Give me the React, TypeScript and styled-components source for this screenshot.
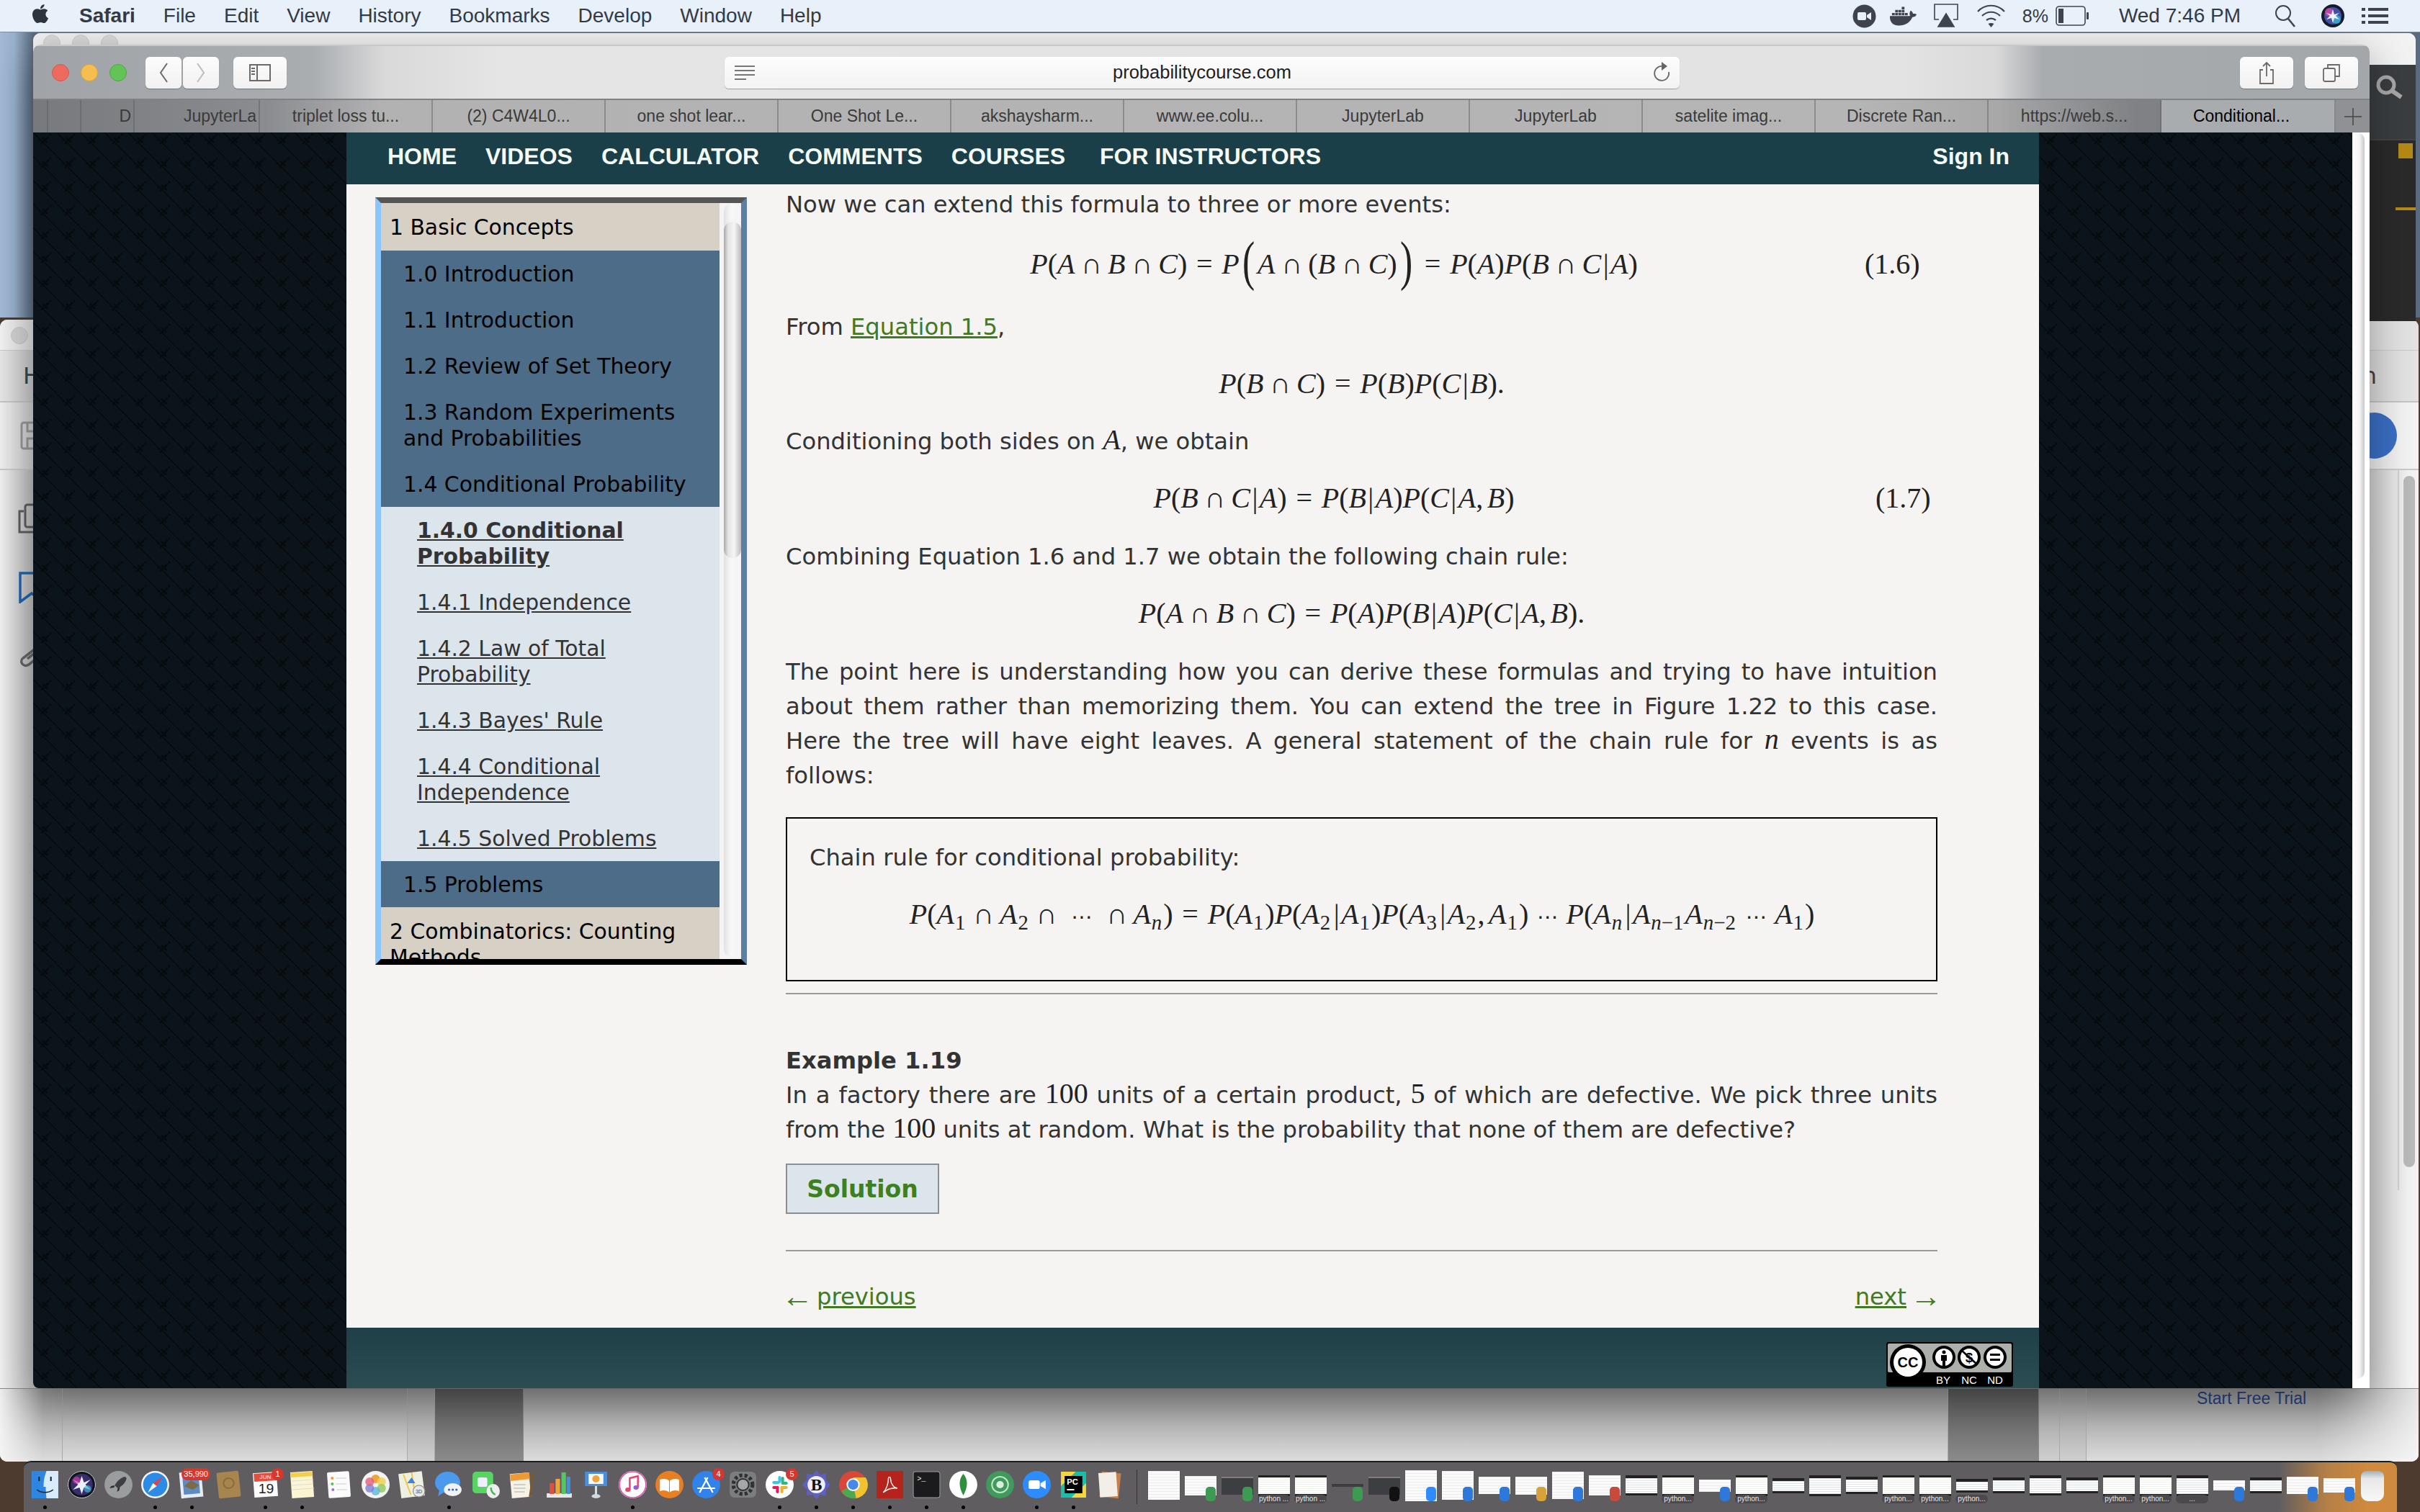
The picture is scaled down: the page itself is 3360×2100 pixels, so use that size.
import React from "react";
import styled, { createGlobalStyle } from "styled-components";
import { FaApple, FaDocker } from "react-icons/fa";

const Global = createGlobalStyle`
  html, body { margin: 0; padding: 0; width: 3360px; height: 2100px; overflow: hidden; background: #4d3b2f; }
  * { box-sizing: border-box; }
`;

const SANS = `"Liberation Sans", Arial, sans-serif`;
const BODY = `"DejaVu Sans", Verdana, sans-serif`;
const SERIF = `"Liberation Serif", "DejaVu Serif", serif`;

const PATTERN = `url("data:image/svg+xml,%3Csvg xmlns='http://www.w3.org/2000/svg' width='33' height='33'%3E%3Cpath d='M-3 -3L36 36' stroke='%23070a0d' stroke-width='1.6'/%3E%3Cpath d='M22 5L11 16M13 7L20 14M10 9L8 11M25 2L23 4' stroke='%23080b0e' stroke-width='3'/%3E%3C/svg%3E")`;

const Desktop = styled.div`
  position: relative; width: 3360px; height: 2100px; overflow: hidden;
  background: linear-gradient(180deg, transparent 0, transparent 21%, #4d3b2f 21%, #4d3b2f 100%),
    linear-gradient(90deg, #a4bbd8 0, #9ab1cc 20px, #5a6b80 46px);
`;

/* ---------- menu bar ---------- */
const MenuBar = styled.div`
  position: absolute; left: 0; top: 0; width: 3360px; height: 45px; z-index: 5;
  display: flex; align-items: center; justify-content: space-between;
  padding: 0 44px 0 41px; background: #e8f0f9; border-bottom: 1px solid #7d8ea1;
  font: 28px ${SANS}; color: #333a45;
`;
const MenuLeft = styled.div`display: flex; align-items: center; gap: 39px;`;
const AppleMark = styled.span`display: flex; font-size: 30px; margin-top: -6px; color: #2e343d;`;
const MenuApp = styled.b`font-weight: 700;`;
const MenuRight = styled.div`display: flex; align-items: center;`;
const Tray = styled.span<{ $ml: number }>`display: flex; align-items: center; margin-left: ${(p) => p.$ml}px;`;
const TrayPct = styled(Tray)`font-size: 25px;`;

/* ---------- back windows ---------- */
const BackTop = styled.div`
  position: absolute; left: 46px; top: 46px; width: 3308px; height: 400px; border-radius: 10px 10px 0 0;
  background: #f4f4f4; display: flex; flex-direction: column; overflow: hidden;
`;
const BackTopTitle = styled.div`height: 44px; display: flex; gap: 16px; padding: 2px 0 0 14px; background: #f3f3f3; flex: none;`;
const GhostLight = styled.span`width: 24px; height: 24px; border-radius: 50%; background: #dcdcdc; border: 1px solid #cfcfcf;`;
const DarkPane = styled.div`flex: 1; background: #2a2a2a; display: flex; flex-direction: column; align-items: flex-end;`;
const DarkSearch = styled.div`
  width: 100%; height: 105px; background: #3a3e40; border-bottom: 2px solid #444;
  display: flex; justify-content: flex-end; padding: 14px 14px 0 0; color: #a9a9a9;
`;
const GoldChip = styled.span`width: 20px; height: 21px; background: #b58a16; margin: 4px 4px 0 0;`;
const GoldRule = styled.span`width: 28px; height: 4px; background: #b58a16; margin-top: 68px;`;

const BackMain = styled.div`
  position: absolute; left: 0; top: 444px; width: 3358px; height: 1586px; border-radius: 10px;
  background: #f2f2f2; display: flex; flex-direction: column; overflow: hidden;
`;
const BackTitle = styled.div`height: 43px; flex: none; border-bottom: 1px solid #c9c9c9; padding: 10px 0 0 15px; background: linear-gradient(90deg, #f3f3f3 0, #e2e2e2 40px);`;
const BackLight = styled.span`display: block; width: 24px; height: 24px; border-radius: 50%; background: #d3d3d3; border: 1px solid #c8c8c8;`;
const BackTabs = styled.div`
  height: 72px; flex: none; border-bottom: 2px solid #c5c5c5; display: flex; justify-content: space-between; align-items: center;
  padding: 0 58px 0 32px; font: 32px ${BODY}; color: #444; background: linear-gradient(90deg, #e8e8e8 0, #c8c8c8 46px, #dcdcdc 3290px, #e4e4e4 100%);
`;
const BackTools = styled.div`
  height: 94px; flex: none; border-bottom: 2px solid #c9c9c9; display: flex; justify-content: space-between; align-items: center;
  padding: 0 30px 0 28px; background: linear-gradient(90deg, #f0f0f0 0, #cfcfcf 46px, #eee 3290px, #f4f4f4 100%);
`;
const BlueDot = styled.span`width: 64px; height: 64px; border-radius: 50%; background: #3a6fc4;`;
const BackBody = styled.div`flex: 1; display: flex; justify-content: space-between; background: linear-gradient(90deg, #f2f2f2 0, #bdbdbd 46px, #d0d0d0 3290px, #f3f3f3 3345px);`;
const BackIcons = styled.div`display: flex; flex-direction: column; gap: 52px; padding: 45px 0 0 24px; color: #666;`;
const BackScrollCol = styled.div`width: 29px; border-left: 2px solid #cfcfcf; padding: 8px 6px 0 6px; height: 1000px;`;
const BackScroll = styled.div`width: 16px; height: 960px; border-radius: 8px; background: #b9b9b9;`;
const BackStrip = styled.div`
  height: 102px; flex: none; display: flex; border-top: 1px solid #888; margin-top: auto;
`;
const StripCol = styled.div<{ $w?: number; $dark?: boolean; $mid?: boolean; $fade?: boolean }>`
  ${(p) => (p.$w ? `width:${p.$w}px;flex:none;` : "flex:1;")}
  border-right: 1px solid ${(p) => (p.$dark ? "#8a8a8a" : "#a9a9a9")};
  background: ${(p) =>
    p.$dark
      ? "linear-gradient(180deg,#5a5a5a,#8b8b8b)"
      : p.$mid
        ? "linear-gradient(180deg,#9a9a9a,#cfcfcf)"
        : p.$fade
          ? "linear-gradient(90deg,rgba(245,245,245,.95) 0,rgba(245,245,245,0) 60px),linear-gradient(180deg,#959595,#dcdcdc)"
          : "linear-gradient(180deg,#959595,#dcdcdc)"};
`;
const StripLast = styled.div`
  flex: 1; padding: 0 0 0 153px; font: 23px ${SANS}; color: #24407f;
  background: linear-gradient(90deg, rgba(255,255,255,0) 70%, rgba(255,255,255,.75) 100%), linear-gradient(180deg,#959595,#dcdcdc);
`;

/* ---------- Safari ---------- */
const Safari = styled.div`
  position: absolute; left: 46px; top: 62px; width: 3244px; height: 1866px; z-index: 2;
  border-radius: 10px 10px 0 8px; overflow: hidden; display: flex; flex-direction: column;
  box-shadow: 0 16px 60px rgba(0,0,0,.35);
`;
const Toolbar = styled.div`
  height: 75px; flex: none; display: flex; align-items: center; padding: 0 16px 0 26px; position: relative;
  border-top: 2px solid #c8c8c8;
  background: linear-gradient(90deg, #a0a4a8 0, #a9adb0 12%, #d9d9da 15%, #e6e5e6 20%, #e4e3e4 80%, #d9d9da 84%, #a9acaf 86%, #a4a7aa 100%);
`;
const Lights = styled.div`display: flex; gap: 16px; margin-right: 26px;`;
const Light = styled.span<{ $c: string; $b: string }>`
  width: 24px; height: 24px; border-radius: 50%; background: ${(p) => p.$c}; border: 1px solid ${(p) => p.$b};
`;
const ToolBtn = styled.div<{ $w: number; $ml?: number }>`
  width: ${(p) => p.$w}px; height: 44px; margin-left: ${(p) => p.$ml ?? 0}px; flex: none; border-radius: 6px;
  background: linear-gradient(180deg, #fcfcfc, #f1f1f1); box-shadow: 0 1px 1px rgba(0,0,0,.3);
  display: flex; align-items: center; justify-content: center; color: #6a6a6a;
`;
const Address = styled.div`
  width: 1326px; height: 44px; margin-left: 608px; flex: none; border-radius: 6px; position: relative;
  background: linear-gradient(180deg, #fdfdfd, #f3f3f3); box-shadow: 0 1px 1px rgba(0,0,0,.3);
  display: flex; align-items: center; justify-content: space-between; padding: 0 12px 0 14px;
`;
const AddressText = styled.span`
  position: absolute; left: 0; right: 0; text-align: center; font: 25.5px ${SANS}; color: #1e1e1e;
`;
const ToolRight = styled.div`margin-left: auto; display: flex; gap: 16px;`;

const TabBar = styled.div`
  height: 47px; flex: none; display: flex; border-top: 2px solid #808184; font: 23px ${SANS}; color: #3a3a3a;
  background: linear-gradient(90deg, #77797d 0, #8a8c8f 10%, #b3b2b3 15%, #b6b5b6 78%, #a8a8a9 84%, #7f8184 90%, #7f8184 91%);
`;
const Tab = styled.div<{ $w: number; $active?: boolean; $end?: boolean }>`
  width: ${(p) => p.$w}px; flex: none; display: flex; align-items: center;
  justify-content: ${(p) => (p.$end ? "flex-end" : "center")}; padding-right: ${(p) => (p.$end ? 3 : p.$active ? 18 : 0)}px;
  overflow: hidden; white-space: nowrap; border-right: 2px solid rgba(90,90,92,.45);
  ${(p) => (p.$active ? "background:#a9acaf;color:#000;" : "")}
`;
const TabPlus = styled.div`flex: 1; display: flex; align-items: center; justify-content: center; color: #444; background: #8f9194;`;

const Viewport = styled.div`flex: 1; display: flex; min-height: 0;`;
const Wall = styled.div`width: 435px; flex: none; background-color: #0a141a; background-image: ${PATTERN};`;
const Gutter = styled.div`flex: 1; background: #fff; padding-right: 7px;`;
const GutterPill = styled.div`height: 1731px; border-radius: 0 10px 10px 0; background: linear-gradient(90deg, #fff 0, #f3f3f3 60%, #c8c8c8 100%);`;

const Page = styled.div`width: 2350px; flex: none; display: flex; flex-direction: column; background: #f5f4f2;`;
const NavBar = styled.nav`
  height: 72px; flex: none; background: #1b3f48; display: flex; align-items: center; padding: 0 41px 6px 57px;
  gap: 40px; font: 700 32px ${SANS}; color: #f4fbf6;
`;
const SignIn = styled.span`margin-left: auto;`;
const NavWide = styled.span`margin-left: 8px;`;
const Main = styled.div`flex: 1; display: flex; padding-left: 40px; min-height: 0;`;
const PageFoot = styled.footer`
  height: 84px; flex: none; background: linear-gradient(180deg, #203f48, #2a4d52); display: flex; justify-content: flex-end;
  padding: 20px 36px 2px 0;
`;

/* sidebar */
const Sidebar = styled.aside`
  width: 516px; height: 1066px; margin-top: 18px; flex: none; display: flex; overflow: hidden;
  border-style: solid; border-width: 8px; border-color: #555 #5b7fa3 #000 #8cc5fb;
  font: 29.8px/36px ${BODY};
`;
const TocList = styled.div`width: 470px; flex: none; overflow: hidden;`;
const Chapter = styled.div`background: #d7d0c5; color: #000; padding: 16px 12px 14px;`;
const Section = styled.div`background: #4c6c87; color: #000; padding: 15px 20px 13px 31px;`;
const SubGroup = styled.div`background: #dde5ec; color: #333;`;
const Sub = styled.div<{ $on?: boolean }>`
  padding: 15px 40px 13px 50px; text-decoration: underline; font-weight: ${(p) => (p.$on ? 700 : 400)};
`;
const TocTrack = styled.div`flex: 1; padding-left: 6px; background: #f5f4f2;`;
const TocRail = styled.div`
  width: 24px; height: 1048px; border-radius: 12px; padding-top: 26px;
  background: linear-gradient(90deg, #e2e2e2, #f7f7f7 40%, #f4f4f4);
`;
const TocThumb = styled.div`
  width: 24px; height: 467px; border-radius: 12px;
  background: linear-gradient(90deg, #a9a9a9 0, #e4e4e4 25%, #f5f5f5 60%, #bbb 100%);
`;

/* article */
const Article = styled.article`
  width: 1599px; margin-left: 54px; flex: none; font: 32.2px/48px ${BODY}; color: #333;
`;
const P = styled.p<{ $mt: number }>`margin: ${(p) => p.$mt}px 0 0 0;`;
const JLine = styled.span`display: block; text-align: justify; text-align-last: justify;`;
const Line = styled.span`display: block;`;
const A = styled.a`color: #417a22; text-decoration: underline;`;
const EqRow = styled.div<{ $mt: number; $h?: number }>`
  margin-top: ${(p) => p.$mt}px; height: ${(p) => p.$h ?? 48}px; display: flex; align-items: center;
  font: 40px/48px ${SERIF}; color: #222; white-space: nowrap;
`;
const EqCenter = styled.div`flex: 1; text-align: center;`;
const EqTagged = styled.div`width: 1400px; margin-left: 61px; flex: none; text-align: center;`;
const EqTag = styled.span<{ $ml: number }>`margin-left: ${(p) => p.$ml}px;`;
const Inline = styled.span`font: 40px/1 ${SERIF}; color: #222;`;
const InlineVar = styled.i`font: italic 40px/1 ${SERIF}; color: #222;`;
const MVar = styled.i`font-style: italic;`;
const MBin = styled.span`margin: 0 .21em;`;
const MRel = styled.span`margin: 0 .32em;`;
const MPipe = styled.span`margin: 0 .06em;`;
const MDots = styled.span`margin: 0 12px; font-family: ${BODY}; font-size: .72em; letter-spacing: -.02em;`;
const MComma = styled.span`margin-right: .14em;`;
const MBig = styled.span`font-size: 1.9em; font-weight: 400; line-height: 0; vertical-align: -.1em; transform: scaleX(.68); display: inline-block;`;
const MSub = styled.span`font-size: .72em; vertical-align: -.28em; line-height: 0; margin: 0 2px 0 1px;`;
const Rule = styled.div<{ $mt: number }>`height: 2px; margin-top: ${(p) => p.$mt}px; background: #9a9a9a;`;
const Boxed = styled.div`
  margin-top: 34px; height: 228px; border: 2px solid #000; padding: 30px 29px 0 31px;
`;
const BoxEq = styled(EqRow)`margin-left: -1px;`;
const Strong = styled.div`margin-top: 68px; font-weight: 700; line-height: 48px;`;
const SolutionBtn = styled.div`
  margin-top: 23px; width: 213px; height: 70px; border: 2px solid #8a8f94; background: #dde5ec; color: #3d8020;
  font: 700 33px/68px ${BODY}; text-align: center;
`;
const Pager = styled.div`margin-top: 39px; display: flex; justify-content: space-between; color: #417a22;`;
const PagerSide = styled.span`display: flex; align-items: center; gap: 5px;`;
const ArrowBack = styled.span`font: 44px/1 ${SERIF}; margin-left: -6px;`;
const ArrowNext = styled.span`font: 44px/1 ${SERIF}; margin-right: -6px;`;

/* dock */
const Dock = styled.div`
  position: absolute; left: 33px; top: 2029px; width: 3295px; height: 71px; z-index: 3;
  border-radius: 10px 10px 0 0; border-top: 2px solid #1c1c1f; display: flex; padding: 0 0 0 4px;
  background: linear-gradient(90deg, #5f5d60 0, #5f5d60 95%, #b47f47 97%, #cf8a3d 98.8%);
`;
const DockApp = styled.div`width: 51px; flex: none; position: relative; padding: 11px 4px 0 4px;`;
const DockDot = styled.span`position: absolute; left: 23px; top: 60px; width: 5px; height: 5px; border-radius: 50%; background: #000;`;
const DockBadge = styled.span`
  position: absolute; right: 0; top: 8px; min-width: 17px; height: 17px; padding: 0 3px; border-radius: 9px; background: #d8362d;
  color: #fff; font: 11px/17px ${SANS}; text-align: center;
`;
const DockSep = styled.span`width: 1px; height: 48px; margin: 10px 11px 0 11px; background: #333; flex: none;`;
const ThumbCell = styled.div`width: 51px; flex: none; position: relative; display: flex; justify-content: center; align-items: center; height: 50px; margin-top: 7px;`;
const ThumbBox = styled.div<{ $kind: string; $h: number }>`
  width: 44px; height: ${(p) => p.$h}px;
  ${(p) => (p.$kind === "py"
    ? "background:repeating-linear-gradient(180deg,#eef3e8 0,#eef3e8 1px,#fff 1px,#fff 3px);border-top:3px solid #222;border-bottom:3px solid #222;"
    : p.$kind === "term"
      ? "background:repeating-linear-gradient(180deg,#dfe3e6 0,#dfe3e6 1px,#fff 1px,#fff 3px);border-top:4px solid #222;border-bottom:3px solid #222;"
      : p.$kind === "dark"
        ? "background:linear-gradient(180deg,#7f7f7f 0,#7f7f7f 2px,#3d3e42 2px);"
        : p.$kind === "line"
          ? "background:#3d3e42;"
          : "background:repeating-linear-gradient(180deg,#ececec 0,#ececec 1px,#fbfbfb 1px,#fbfbfb 4px);")}
`;
const ThumbBadge = styled.span<{ $c: string }>`
  position: absolute; right: 4px; bottom: 3px; width: 14px; height: 20px; border-radius: 5px; background: ${(p) => p.$c};
`;
const ThumbLabel = styled.span`
  position: absolute; left: 3px; right: 3px; bottom: 0; height: 12px; border-radius: 6px; background: #4b494c;
  color: #e6e6e6; font: 10px/12px ${SANS}; text-align: center; overflow: hidden; white-space: nowrap;
`;
const Trash = styled.div`
  width: 32px; height: 42px; margin: 12px 0 0 5px; flex: none; border-radius: 8px 8px 10px 10px;
  background: linear-gradient(180deg, #9fb0ba 0, #e8e8e8 25%, #f8f8f8 100%);
`;

/* ---------- math ---------- */
function renderMath(s: string): React.ReactNode[] {
  const out: React.ReactNode[] = [];
  for (let i = 0; i < s.length; i++) {
    const c = s[i];
    const k = i;
    if (c === "_") {
      let inner = s[i + 1];
      if (inner === "{") {
        const e = s.indexOf("}", i);
        inner = s.slice(i + 2, e);
        i = e;
      } else i++;
      out.push(<MSub key={k}>{renderMath(inner)}</MSub>);
    } else if (c === "∩") out.push(<MBin key={k}>∩</MBin>);
    else if (c === "=") out.push(<MRel key={k}>=</MRel>);
    else if (c === "|") out.push(<MPipe key={k}>|</MPipe>);
    else if (c === "~") out.push(<MDots key={k}>⋯</MDots>);
    else if (c === ",") out.push(<MComma key={k}>,</MComma>);
    else if (c === "[") out.push(<MBig key={k}>(</MBig>);
    else if (c === "]") out.push(<MBig key={k}>)</MBig>);
    else if (/[A-Za-z]/.test(c)) out.push(<MVar key={k}>{c}</MVar>);
    else out.push(<span key={k}>{c}</span>);
  }
  return out;
}

/* ---------- dock icons ---------- */
const Ico = ({ children }: { children: React.ReactNode }) => (
  <svg width="43" height="40" viewBox="0 0 42 40" preserveAspectRatio="none">{children}</svg>
);
const round = (c: string) => <circle cx="21" cy="20" r="19" fill={c} />;
const apps: { n: string; dot?: boolean; badge?: string; g: React.ReactNode }[] = [
  { n: "finder", dot: true, g: <><rect x="3" y="1" width="36" height="38" fill="#d9ecfb" /><path d="M3 1h20c-3 8-4 14-4 22h3c0 6 .5 11 1 16H3z" fill="#2f86e0" /><path d="M13 9v6M29 9v6" stroke="#123" strokeWidth="2" /><path d="M10 27c6 5 16 5 22 0" stroke="#123" strokeWidth="1.6" fill="none" /></> },
  { n: "siri", g: <>{round("#10131c")}<circle cx="21" cy="20" r="15" fill="#3a2d6c" /><path d="M21 8l3 9 9-4-7 7 7 7-9-3-3 9-3-9-9 3 7-7-7-7 9 4z" fill="#e9f1ff" /><circle cx="14" cy="14" r="5" fill="#d03fa0" opacity=".7" /><circle cx="29" cy="26" r="5" fill="#3fb6d8" opacity=".7" /><circle cx="21" cy="20" r="18.5" fill="none" stroke="#fff" strokeWidth=".8" /></> },
  { n: "launchpad", g: <>{round("#9a9c9e")}<path d="M30 9c-6 1-11 6-14 12l4 4c6-3 11-8 12-14z" fill="#3c3f44" /><path d="M16 21l-5 1-2 3 6-1zM20 25l-1 5 3-2 1-5z" fill="#2c2e32" /></> },
  { n: "safari", dot: true, g: <>{round("#f4f6f8")}<circle cx="21" cy="20" r="16.5" fill="#2d8be8" /><path d="M31 9L18 18l5 4z" fill="#e2433b" /><path d="M11 31l7-13 5 4z" fill="#fff" /></> },
  { n: "mail", dot: true, badge: "35,990", g: <><rect x="5" y="2" width="30" height="36" fill="#e5edf7" transform="rotate(-5 20 20)" /><rect x="9" y="7" width="22" height="26" fill="#5e8cc2" transform="rotate(-5 20 20)" /><path d="M10 22l10-8 11 7-9 6z" fill="#7d6a46" /></> },
  { n: "contacts", g: <><rect x="6" y="2" width="30" height="36" rx="2" fill="#a8844f" transform="rotate(-6 21 20)" /><circle cx="21" cy="18" r="7" fill="none" stroke="#8d6c3c" strokeWidth="2" /></> },
  { n: "calendar", dot: true, badge: "1", g: <><rect x="5" y="3" width="32" height="34" fill="#fff" transform="rotate(-4 21 20)" /><path d="M5 5l32-2 1 11-32 2z" fill="#e0503f" /><text x="21" y="12" fontSize="8" fill="#fff" textAnchor="middle" fontFamily="Liberation Sans">JUN</text><text x="22" y="32" fontSize="19" fill="#222" textAnchor="middle" fontFamily="Liberation Sans">19</text></> },
  { n: "notes", dot: true, g: <><rect x="6" y="2" width="30" height="36" fill="#fbf5d2" transform="rotate(-4 21 20)" /><path d="M5 4l30-2 .5 6-30 2z" fill="#f3ce4a" /><path d="M7 15l29-2M7 21l29-2M8 27l29-2" stroke="#ddd" /></> },
  { n: "reminders", g: <><rect x="6" y="2" width="30" height="36" rx="2" fill="#fbfbfb" transform="rotate(-4 21 20)" /><circle cx="12" cy="11" r="2" fill="#f29a3b" /><circle cx="12" cy="19" r="2" fill="#57c15a" /><circle cx="13" cy="27" r="2" fill="#a86cd6" /><path d="M17 11h14M17 19h14M18 27h14" stroke="#ccc" /></> },
  { n: "photos", g: <>{round("#f3f3f3")}<circle cx="21" cy="12" r="6" fill="#f0a43b" /><circle cx="29" cy="16" r="6" fill="#ecd24c" opacity=".8" /><circle cx="29" cy="25" r="6" fill="#8ecb5a" opacity=".8" /><circle cx="21" cy="29" r="6" fill="#5fb6d8" opacity=".8" /><circle cx="13" cy="25" r="6" fill="#7b7fd8" opacity=".8" /><circle cx="13" cy="16" r="6" fill="#e2607d" opacity=".8" /></> },
  { n: "maps", g: <><rect x="4" y="3" width="32" height="34" fill="#eef0e2" transform="rotate(-7 21 20)" /><path d="M9 6l10 28M20 3l5 33" stroke="#f2c94c" strokeWidth="2" /><path d="M14 18l6-8 5 8z" fill="#3f84d8" /><circle cx="30" cy="29" r="8" fill="#e8e8e8" stroke="#888" /><text x="30" y="32" fontSize="7" textAnchor="middle" fill="#444" fontFamily="Liberation Sans">3D</text></> },
  { n: "messages", dot: true, g: <><ellipse cx="19" cy="17" rx="17" ry="15" fill="#4c9aee" /><path d="M8 27l-2 9 9-6z" fill="#4c9aee" /><ellipse cx="26" cy="27" rx="12" ry="9" fill="#f2f2f2" /><circle cx="21" cy="27" r="1.6" fill="#2c6bc0" /><circle cx="26" cy="27" r="1.6" fill="#2c6bc0" /><circle cx="31" cy="27" r="1.6" fill="#2c6bc0" /></> },
  { n: "facetime", g: <><rect x="3" y="2" width="28" height="30" rx="5" fill="#58d465" /><rect x="10" y="10" width="13" height="13" rx="2" fill="#eef" /><ellipse cx="31" cy="29" rx="9" ry="10" fill="#eee" /><path d="M28 24c0 5 2 8 6 10" stroke="#47b556" strokeWidth="2.4" fill="none" /></> },
  { n: "pages", g: <><rect x="5" y="4" width="26" height="34" fill="#f6f2e8" transform="rotate(-5 18 20)" /><path d="M4 6l26-3 1 9-26 3z" fill="#ef9a33" /><path d="M9 20h16M9 25h16M10 30h14" stroke="#aaa" /><path d="M36 3l-5 34" stroke="#7c5a2b" strokeWidth="3" /></> },
  { n: "numbers", g: <><rect x="4" y="32" width="34" height="6" fill="#e8e8e8" /><rect x="8" y="18" width="6" height="15" fill="#e0503f" /><rect x="16" y="12" width="6" height="21" fill="#f0a53b" /><rect x="24" y="3" width="6" height="30" fill="#58c465" /><rect x="31" y="9" width="5" height="24" fill="#3f92d8" /></> },
  { n: "keynote", g: <><rect x="6" y="2" width="30" height="20" fill="#4c8fd8" /><rect x="11" y="5" width="20" height="14" fill="#fafafa" /><circle cx="21" cy="12" r="5" fill="#f0a53b" /><rect x="19.5" y="22" width="3" height="12" fill="#d5dde5" /><ellipse cx="21" cy="36" rx="6" ry="3" fill="#cfd8e2" /></> },
  { n: "itunes", dot: true, g: <>{round("#fdfdfd")}<circle cx="21" cy="20" r="18" fill="none" stroke="#d84fa8" strokeWidth="1.6" /><path d="M17 27V11l11-3v16" stroke="#e8456f" strokeWidth="2.4" fill="none" /><ellipse cx="14.5" cy="27" rx="3.6" ry="3" fill="#e8456f" /><ellipse cx="25.5" cy="24" rx="3.6" ry="3" fill="#9060d8" /></> },
  { n: "books", g: <>{round("#e97f22")}<path d="M8 13c5-2 10-1 13 2 3-3 8-4 13-2v16c-5-2-10-1-13 2-3-3-8-4-13-2z" fill="#fff" /><path d="M21 15v16" stroke="#e97f22" /></> },
  { n: "appstore", badge: "4", g: <>{round("#2f83ea")}<path d="M12 31L23 10M30 31L19 10M9 25h24" stroke="#fff" strokeWidth="2.2" /></> },
  { n: "prefs", g: <><rect x="3" y="2" width="36" height="36" rx="7" fill="#7b7d80" /><circle cx="21" cy="20" r="13" fill="none" stroke="#2f3032" strokeWidth="5" strokeDasharray="4 3" /><circle cx="21" cy="20" r="8" fill="#a4a6a8" stroke="#2f3032" strokeWidth="2" /></> },
  { n: "slack", dot: true, badge: "5", g: <>{round("#fff")}<rect x="11" y="15" width="10" height="4" rx="2" fill="#36c5f0" /><rect x="19" y="8" width="4" height="10" rx="2" fill="#36c5f0" /><rect x="23" y="16" width="9" height="4" rx="2" fill="#2eb67d" /><rect x="23" y="9" width="4" height="8" rx="2" fill="#2eb67d" /><rect x="22" y="22" width="10" height="4" rx="2" fill="#ecb22e" /><rect x="22" y="22" width="4" height="10" rx="2" fill="#ecb22e" /><rect x="11" y="22" width="9" height="4" rx="2" fill="#e01e5a" /><rect x="16" y="22" width="4" height="10" rx="2" fill="#e01e5a" /></> },
  { n: "bbedit", dot: true, g: <><path d="M21 0l5 6 8-1 0 8 6 7-6 7 0 8-8-1-5 6-5-6-8 1 0-8-6-7 6-7 0-8 8 1z" fill="#5f5fc0" /><circle cx="21" cy="20" r="12" fill="#eef" /><text x="21" y="28" fontSize="23" textAnchor="middle" fontFamily="Liberation Serif" fontWeight="700" fill="#111">B</text></> },
  { n: "chrome", dot: true, g: <>{round("#d8473a")}<path d="M21 20L5 29a19 19 0 0 0 20 10z" fill="#4da94f" /><path d="M21 20l4 19A19 19 0 0 0 38 10H21z" fill="#f2c230" /><circle cx="21" cy="20" r="9" fill="#fff" /><circle cx="21" cy="20" r="7" fill="#4a88e8" /></> },
  { n: "acrobat", dot: true, g: <><rect x="3" y="1" width="36" height="38" fill="#b5241c" /><path d="M12 31c4-4 7-12 7-19 0-4 3-3 3 0 0 7 5 13 9 13-6-1-12 0-19 6z" fill="none" stroke="#fff" strokeWidth="1.4" /></> },
  { n: "terminal", dot: true, g: <><rect x="3" y="2" width="36" height="36" rx="3" fill="#1b1b1d" stroke="#9a9a9a" /><text x="8" y="15" fontSize="10" fill="#eee" fontFamily="Liberation Mono">&gt;_</text></> },
  { n: "mongo", dot: true, g: <>{round("#fff")}<path d="M21 5c6 7 7 17 0 30-7-13-6-23 0-30z" fill="#2f8f3c" /></> },
  { n: "robo", g: <>{round("#3f9a5c")}<circle cx="21" cy="20" r="11" fill="none" stroke="#bfe5c8" strokeWidth="2" /><circle cx="21" cy="20" r="5" fill="#d8f0dd" /></> },
  { n: "zoom", dot: true, g: <>{round("#2d8cff")}<rect x="10" y="14" width="15" height="12" rx="2.5" fill="#fff" /><path d="M26 18l7-4v12l-7-4z" fill="#fff" /></> },
  { n: "pycharm", dot: true, g: <><rect x="4" y="2" width="34" height="36" fill="#17c0a8" /><path d="M4 2h20L4 22zM38 38H18l20-20z" fill="#f5d63d" /><rect x="9" y="8" width="24" height="24" fill="#000" /><text x="12" y="20" fontSize="11" fontWeight="700" fill="#fff" fontFamily="Liberation Sans">PC</text><rect x="12" y="26" width="10" height="2" fill="#fff" /></> },
  { n: "files", g: <><rect x="8" y="3" width="26" height="35" fill="#c87f4a" transform="rotate(6 21 20)" /><rect x="6" y="3" width="24" height="34" fill="#f1efe8" transform="rotate(-4 18 20)" /></> },
];

type Th = { k: string; h: number; label?: string; badge?: string };
const thumbs: Th[] = [
  { k: "white", h: 40 }, { k: "white", h: 27, badge: "#3d9a52" }, { k: "dark", h: 25, badge: "#3d9a52" },
  { k: "py", h: 29, label: "python ..." }, { k: "py", h: 29, label: "python ..." }, { k: "line", h: 4, badge: "#3d9a52" },
  { k: "dark", h: 25, badge: "#111" }, { k: "white", h: 43, badge: "#2d8cff" }, { k: "white", h: 40, badge: "#2d78d8" },
  { k: "white", h: 24, badge: "#2d78d8" }, { k: "white", h: 25, badge: "#d8a13a" }, { k: "white", h: 38, badge: "#2d78d8" },
  { k: "white", h: 28, badge: "#c84a3a" }, { k: "term", h: 28 }, { k: "py", h: 29, label: "python..." },
  { k: "white", h: 17, badge: "#2d78d8" }, { k: "py", h: 29, label: "python..." }, { k: "term", h: 21 },
  { k: "term", h: 29 }, { k: "term", h: 24 }, { k: "py", h: 29, label: "python..." },
  { k: "py", h: 29, label: "python..." }, { k: "term", h: 19, label: "python..." }, { k: "term", h: 22 },
  { k: "term", h: 28 }, { k: "term", h: 22 }, { k: "py", h: 29, label: "python..." },
  { k: "py", h: 29, label: "python..." }, { k: "term", h: 29, label: "..." }, { k: "white", h: 14, badge: "#2d78d8" },
  { k: "term", h: 22 }, { k: "white", h: 24, badge: "#2d78d8" }, { k: "white", h: 20, badge: "#2d78d8" },
];

const tabs = ["triplet loss tu...", "(2) C4W4L0...", "one shot lear...", "One Shot Le...", "akshaysharm...", "www.ee.colu...", "JupyterLab", "JupyterLab", "satelite imag...", "Discrete Ran...", "https://web.s..."];
const navItems = ["HOME", "VIDEOS", "CALCULATOR", "COMMENTS", "COURSES"];
const menus = ["File", "Edit", "View", "History", "Bookmarks", "Develop", "Window", "Help"];
const stripCols: { w: number; dark?: boolean; mid?: boolean; fade?: boolean }[] = [
  { w: 87, fade: true }, { w: 479 }, { w: 38, mid: true }, { w: 123, dark: true }, { w: 1978 }, { w: 126, dark: true }, { w: 29, mid: true }, { w: 37, mid: true },
];

export default function App() {
  return (
    <Desktop>
      <Global />
      <MenuBar>
        <MenuLeft>
          <AppleMark><FaApple /></AppleMark>
          <MenuApp>Safari</MenuApp>
          {menus.map((m) => <span key={m}>{m}</span>)}
        </MenuLeft>
        <MenuRight>
          <Tray $ml={0}>
            <svg width="33" height="33" viewBox="0 0 33 33"><circle cx="16.5" cy="16.5" r="16" fill="#3f444c" /><rect x="7" y="11" width="12" height="11" rx="2" fill="#e8f0f9" /><path d="M20 15l6-4v11l-6-4z" fill="#e8f0f9" /></svg>
          </Tray>
          <Tray $ml={19}><FaDocker size={37} color="#3f444c" /></Tray>
          <Tray $ml={23}>
            <svg width="36" height="34" viewBox="0 0 36 34" fill="none" stroke="#3f444c" strokeWidth="1.6"><path d="M8 22H2V1h32v21h-6" /><path d="M18 14l11 18H7z" fill="#3f444c" /></svg>
          </Tray>
          <Tray $ml={24}>
            <svg width="41" height="34" viewBox="0 0 41 34" fill="none" stroke="#3f444c" strokeWidth="2.2"><path d="M2 11c10-11 27-11 37 0" /><path d="M8 17c7-7 18-7 25 0" /><path d="M14 23c4-3 9-3 13 0" /><path d="M20.5 33l-4-5c2.500-1.500 5.500-1.500 8 0z" fill="#3f444c" stroke="none" /></svg>
          </Tray>
          <TrayPct $ml={23}>8%</TrayPct>
          <Tray $ml={10}>
            <svg width="47" height="28" viewBox="0 0 47 28"><rect x="1" y="1" width="40" height="26" rx="4" fill="none" stroke="#3f444c" strokeWidth="1.6" /><rect x="4" y="4" width="7" height="20" fill="#3f444c" /><rect x="43" y="9" width="3" height="10" rx="1" fill="#3f444c" /></svg>
          </Tray>
          <Tray $ml={41}>Wed 7:46 PM</Tray>
          <Tray $ml={47}>
            <svg width="30" height="32" viewBox="0 0 30 32" fill="none" stroke="#3f444c" strokeWidth="2"><circle cx="12" cy="12" r="10" /><path d="M19 20l9 11" strokeWidth="2.6" /></svg>
          </Tray>
          <Tray $ml={35}>
            <svg width="32" height="32" viewBox="0 0 32 32"><circle cx="16" cy="16" r="16" fill="#151b2b" /><circle cx="16" cy="16" r="12" fill="#4450a8" /><circle cx="11" cy="11" r="6" fill="#cf49a4" opacity=".8" /><circle cx="21" cy="21" r="6" fill="#35b7d3" opacity=".8" /><path d="M16 7l2 7 7-2-5 4 5 5-7-2-2 7-2-7-7 2 5-5-5-4 7 2z" fill="#eef3ff" /></svg>
          </Tray>
          <Tray $ml={24}>
            <svg width="37" height="28" viewBox="0 0 37 28" fill="#3f444c"><rect x="0" y="3" width="5" height="4" /><rect x="9" y="3" width="28" height="4" /><rect x="0" y="12" width="5" height="4" /><rect x="9" y="12" width="28" height="4" /><rect x="0" y="21" width="5" height="4" /><rect x="9" y="21" width="28" height="4" /></svg>
          </Tray>
        </MenuRight>
      </MenuBar>

      <BackMain>
        <BackTitle><BackLight /></BackTitle>
        <BackTabs><span>H</span><span>n</span></BackTabs>
        <BackTools>
          <svg width="38" height="40" viewBox="0 0 38 40" fill="none" stroke="#999" strokeWidth="3"><rect x="2" y="2" width="34" height="36" rx="3" /><path d="M10 2v12h18M10 38V24h18v14" /></svg>
          <BlueDot />
        </BackTools>
        <BackBody>
          <BackIcons>
            <svg width="44" height="44" viewBox="0 0 44 44" fill="none" stroke="#5f5f5f" strokeWidth="3"><path d="M9 12H3v29h28v-6" /><rect x="11" y="3" width="30" height="31" rx="3" /></svg>
            <svg width="40" height="44" viewBox="0 0 40 44" fill="none" stroke="#1f65b0" strokeWidth="3.500"><path d="M4 2h32v40L20 30 4 42z" /></svg>
            <svg width="44" height="40" viewBox="0 0 44 40" fill="none" stroke="#666" strokeWidth="3.500"><path d="M34 4L8 24c-6 5 1 14 8 9l22-18c3-3-1-8-5-5L14 25" /></svg>
          </BackIcons>
          <BackScrollCol><BackScroll /></BackScrollCol>
        </BackBody>
        <BackStrip>
          {stripCols.map((c, i) => <StripCol key={i} $w={c.w} $dark={c.dark} $mid={c.mid} $fade={c.fade} />)}
          <StripLast>Start Free Trial</StripLast>
        </BackStrip>
      </BackMain>

      <BackTop>
        <BackTopTitle><GhostLight /><GhostLight /><GhostLight /></BackTopTitle>
        <DarkPane>
          <DarkSearch>
            <svg width="44" height="44" viewBox="0 0 44 44" fill="none" stroke="#a9a9a9" strokeWidth="5"><circle cx="17" cy="14" r="11" /><path d="M25 22l13 9" strokeWidth="6" /></svg>
          </DarkSearch>
          <GoldChip />
          <GoldRule />
        </DarkPane>
      </BackTop>

      <Safari>
        <Toolbar>
          <Lights>
            <Light $c="#ee6a5f" $b="#d5574d" />
            <Light $c="#f6bd4f" $b="#d9a441" />
            <Light $c="#61c454" $b="#4ea843" />
          </Lights>
          <ToolBtn $w={50}>
            <svg width="14" height="30" viewBox="0 0 14 30" fill="none" stroke="#6a6a6a" strokeWidth="2"><path d="M12 2L3 15l9 13" /></svg>
          </ToolBtn>
          <ToolBtn $w={50} $ml={2}>
            <svg width="14" height="30" viewBox="0 0 14 30" fill="none" stroke="#bcbcbc" strokeWidth="2"><path d="M2 2l9 13L2 28" /></svg>
          </ToolBtn>
          <ToolBtn $w={74} $ml={20}>
            <svg width="30" height="24" viewBox="0 0 30 24" fill="none" stroke="#6a6a6a" strokeWidth="2"><rect x="1" y="1" width="28" height="22" /><path d="M11 1v22M3 6h5M3 10h5M3 14h5" /></svg>
          </ToolBtn>
          <Address>
            <svg width="28" height="22" viewBox="0 0 28 22" stroke="#777" strokeWidth="2"><path d="M0 2h28M0 8h28M0 14h28M0 20h16" /></svg>
            <AddressText>probabilitycourse.com</AddressText>
            <svg width="26" height="32" viewBox="0 0 26 32" fill="none" stroke="#666" strokeWidth="1.800"><path d="M15 7a10 10 0 1 0 8 8" /><path d="M13 1l8 6-8 6z" fill="#666" stroke="none" /></svg>
          </Address>
          <ToolRight>
            <ToolBtn $w={74}>
              <svg width="24" height="32" viewBox="0 0 24 32" fill="none" stroke="#6a6a6a" strokeWidth="1.800"><path d="M7 12H3v19h18V12h-4M12 21V2M7 7l5-5 5 5" /></svg>
            </ToolBtn>
            <ToolBtn $w={74}>
              <svg width="26" height="28" viewBox="0 0 26 28" fill="none" stroke="#6a6a6a" strokeWidth="1.800"><rect x="2" y="8" width="16" height="18" rx="2" /><path d="M8 8V3h16v16h-6" /></svg>
            </ToolBtn>
          </ToolRight>
        </Toolbar>
        <TabBar>
          <Tab $w={21} />
          <Tab $w={46} />
          <Tab $w={74} $end>D</Tab>
          <Tab $w={174} $end>JupyterLa</Tab>
          {tabs.map((t, i) => <Tab key={i} $w={240}>{t}</Tab>)}
          <Tab $w={242} $active>Conditional...</Tab>
          <TabPlus>
            <svg width="24" height="24" viewBox="0 0 24 24" stroke="#444" strokeWidth="1.500"><path d="M12 0v24M0 12h24" /></svg>
          </TabPlus>
        </TabBar>
        <Viewport>
          <Wall />
          <Page>
            <NavBar>
              {navItems.map((n) => <span key={n}>{n}</span>)}
              <NavWide>FOR INSTRUCTORS</NavWide>
              <SignIn>Sign In</SignIn>
            </NavBar>
            <Main>
              <Sidebar>
                <TocList>
                  <Chapter>1 Basic Concepts</Chapter>
                  <Section>1.0 Introduction</Section>
                  <Section>1.1 Introduction</Section>
                  <Section>1.2 Review of Set Theory</Section>
                  <Section>1.3 Random Experiments and Probabilities</Section>
                  <Section>1.4 Conditional Probability</Section>
                  <SubGroup>
                    <Sub $on>1.4.0 Conditional Probability</Sub>
                    <Sub>1.4.1 Independence</Sub>
                    <Sub>1.4.2 Law of Total Probability</Sub>
                    <Sub>1.4.3 Bayes' Rule</Sub>
                    <Sub>1.4.4 Conditional Independence</Sub>
                    <Sub>1.4.5 Solved Problems</Sub>
                  </SubGroup>
                  <Section>1.5 Problems</Section>
                  <Chapter>2 Combinatorics: Counting Methods</Chapter>
                </TocList>
                <TocTrack><TocRail><TocThumb /></TocRail></TocTrack>
              </Sidebar>
              <Article>
                <P $mt={4}>Now we can extend this formula to three or more events:</P>
                <EqRow $mt={24} $h={70}>
                  <EqTagged>{renderMath("P(A∩B∩C)=P[A∩(B∩C)]=P(A)P(B∩C|A)")}</EqTagged>
                  <EqTag $ml={37}>(1.6)</EqTag>
                </EqRow>
                <P $mt={28}>From <A>Equation 1.5</A>,</P>
                <EqRow $mt={31}><EqCenter>{renderMath("P(B∩C)=P(B)P(C|B).")}</EqCenter></EqRow>
                <P $mt={32}>Conditioning both sides on <InlineVar>A</InlineVar>, we obtain</P>
                <EqRow $mt={31}>
                  <EqTagged>{renderMath("P(B∩C|A)=P(B|A)P(C|A,B)")}</EqTagged>
                  <EqTag $ml={52}>(1.7)</EqTag>
                </EqRow>
                <P $mt={33}>Combining Equation 1.6 and 1.7 we obtain the following chain rule:</P>
                <EqRow $mt={31}><EqCenter>{renderMath("P(A∩B∩C)=P(A)P(B|A)P(C|A,B).")}</EqCenter></EqRow>
                <P $mt={33}>
                  <JLine>The point here is understanding how you can derive these formulas and trying to have intuition</JLine>
                  <JLine>about them rather than memorizing them. You can extend the tree in Figure 1.22 to this case.</JLine>
                  <JLine>Here the tree will have eight leaves. A general statement of the chain rule for <InlineVar>n</InlineVar> events is as</JLine>
                  <Line>follows:</Line>
                </P>
                <Boxed>
                  <Line>Chain rule for conditional probability:</Line>
                  <BoxEq $mt={32}><EqCenter>{renderMath("P(A_1∩A_2∩~∩A_n)=P(A_1)P(A_2|A_1)P(A_3|A_2,A_1)~P(A_n|A_{n−1}A_{n−2}~A_1)")}</EqCenter></BoxEq>
                </Boxed>
                <Rule $mt={16} />
                <Strong>Example 1.19</Strong>
                <P $mt={0}>
                  <JLine>In a factory there are <Inline>100</Inline> units of a certain product, <Inline>5</Inline> of which are defective. We pick three units</JLine>
                  <Line>from the <Inline>100</Inline> units at random. What is the probability that none of them are defective?</Line>
                </P>
                <SolutionBtn>Solution</SolutionBtn>
                <Rule $mt={50} />
                <Pager>
                  <PagerSide><ArrowBack>←</ArrowBack><A>previous</A></PagerSide>
                  <PagerSide><A>next</A><ArrowNext>→</ArrowNext></PagerSide>
                </Pager>
              </Article>
            </Main>
            <PageFoot>
              <svg width="176" height="62" viewBox="0 0 176 62">
                <rect x="0" y="0" width="176" height="62" rx="3" fill="#000" />
                <rect x="2" y="2" width="172" height="40" rx="2" fill="#abb1aa" />
                <circle cx="30" cy="28" r="25" fill="#000" />
                <circle cx="30" cy="28" r="20" fill="#fff" />
                <text x="30" y="35" fontSize="20" fontWeight="700" textAnchor="middle" fontFamily="Liberation Sans" fill="#000">CC</text>
                <circle cx="80" cy="21" r="16" fill="#000" /><circle cx="80" cy="21" r="12" fill="#fff" />
                <circle cx="80" cy="14" r="2.500" fill="#000" /><path d="M76 18h8v8h-2v8h-4v-8h-2z" fill="#000" />
                <circle cx="115" cy="21" r="16" fill="#000" /><circle cx="115" cy="21" r="12" fill="#fff" />
                <text x="115" y="28" fontSize="19" fontWeight="700" textAnchor="middle" fontFamily="Liberation Sans" fill="#000">$</text>
                <path d="M105 12l20 18" stroke="#000" strokeWidth="2.500" />
                <circle cx="151" cy="21" r="16" fill="#000" /><circle cx="151" cy="21" r="12" fill="#fff" />
                <path d="M144 16h14v3h-14zM144 23h14v3h-14z" fill="#000" />
                <text x="79" y="58" fontSize="15" textAnchor="middle" fontFamily="Liberation Sans" fill="#fff">BY</text>
                <text x="115" y="58" fontSize="15" textAnchor="middle" fontFamily="Liberation Sans" fill="#fff">NC</text>
                <text x="151" y="58" fontSize="15" textAnchor="middle" fontFamily="Liberation Sans" fill="#fff">ND</text>
              </svg>
            </PageFoot>
          </Page>
          <Wall />
          <Gutter><GutterPill /></Gutter>
        </Viewport>
      </Safari>

      <Dock>
        {apps.map((a) => (
          <DockApp key={a.n}>
            <Ico>{a.g}</Ico>
            {a.badge && <DockBadge>{a.badge}</DockBadge>}
            {a.dot && <DockDot />}
          </DockApp>
        ))}
        <DockSep />
        {thumbs.map((t, i) => (
          <ThumbCell key={i}>
            <ThumbBox $kind={t.k} $h={t.h} />
            {t.badge && <ThumbBadge $c={t.badge} />}
            {t.label && <ThumbLabel>{t.label}</ThumbLabel>}
          </ThumbCell>
        ))}
        <Trash />
      </Dock>
    </Desktop>
  );
}
